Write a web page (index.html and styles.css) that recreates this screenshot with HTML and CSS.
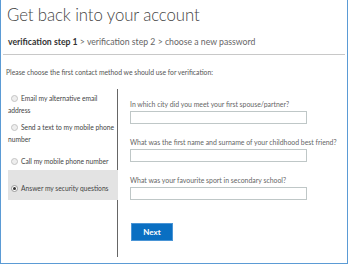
FILE: index.html
```html
<!DOCTYPE html>
<html lang="en">
<head>
  <meta charset="UTF-8">
  <title>Get back into your account</title>
  <meta name="viewport" content="width=device-width, initial-scale=1.0">
  <link rel="stylesheet" href="styles.css">
</head>
<body>

  <div class="frame">
    <!-- HEADER -->
    <h1 class="title">Get back into your account</h1>
    <div class="steps">
      <strong>verification step 1</strong> &gt; verification step 2 &gt; choose a new password
    </div>

    <p class="intro">Please choose the first contact method we should use for verification:</p>

    <!-- METHODS + QUESTIONS -->
    <div class="panel">
      <div class="methods">
        <label class="method m-email">
          <span class="radio"></span>Email my alternative email address
        </label>
        <label class="method m-text">
          <span class="radio"></span>Send a text to my mobile phone number
        </label>
        <label class="method m-call">
          <span class="radio"></span>Call my mobile phone number
        </label>
        <label class="method selected">
          <span class="radio checked"></span>Answer my security questions
        </label>
      </div>

      <div class="questions">
        <div class="question">
          <div class="q-label">In which city did you meet your first spouse/partner?</div>
          <div class="q-input"></div>
        </div>
        <div class="question">
          <div class="q-label">What was the first name and surname of your childhood best friend?</div>
          <div class="q-input"></div>
        </div>
        <div class="question">
          <div class="q-label">What was your favourite sport in secondary school?</div>
          <div class="q-input"></div>
        </div>
        <button class="next-btn">Next</button>
      </div>
    </div>
  </div>

</body>
</html>
```

FILE: styles.css
```css
body {
  font-family: Lato, "Open Sans", sans-serif;
  background: #ffffff;
  margin: 0;
  padding: 0;
}

/* --- FRAME --- */
.frame {
  width: 346px;
  height: 263px;
  border: 1px solid #5b9bd5;
  border-top: none;
  overflow: hidden;
}

/* --- HEADER --- */
.title {
  margin: 0;
  padding: 3px 0 0 6px;
  font-size: 16.8px;
  letter-spacing: -0.1px;
  line-height: 24px;
  font-weight: 300;
  color: #444;
}

.steps {
  margin: 9px 2px 0 2px;
  padding: 0 0 6px 5px;
  font-size: 8.7px;
  line-height: 12px;
  color: #666;
  border-bottom: 1px solid #c8c8c8;
}

.steps strong {
  color: #333;
}

.intro {
  margin: 12px 0 0 5px;
  font-size: 6.8px;
  line-height: 10px;
  color: #555;
}

/* --- PANEL --- */
.panel {
  display: flex;
  margin: 12px 0 0 7px;
}

.methods {
  width: 110px;
  height: 168px;
  border-right: 1px solid #666;
  padding-top: 3px;
  box-sizing: border-box;
}

.method {
  display: block;
  font-size: 6.7px;
  line-height: 12px;
  color: #444;
}

.m-email {
  margin-bottom: 5px;
}

.m-text {
  margin-bottom: 10px;
}

.m-call {
  margin-bottom: 3px;
}

.method.selected {
  background: #e3e3e3;
  padding: 12px 0 6px 0;
  margin-right: -1px;
}

.radio {
  display: inline-block;
  width: 5px;
  height: 5px;
  border: 1px solid #c4c4c4;
  background: #eeeeee;
  border-radius: 50%;
  margin: 0 3px 0 3px;
  vertical-align: -1px;
  position: relative;
}

.radio.checked {
  border-color: #999;
  background: #ffffff;
}

.radio.checked::after {
  content: "";
  position: absolute;
  left: 1px;
  top: 1px;
  width: 3px;
  height: 3px;
  border-radius: 50%;
  background: #333;
}

/* --- QUESTIONS --- */
.questions {
  padding: 10px 0 0 12px;
}

.question {
  margin-bottom: 13px;
}

.q-label {
  font-size: 6.9px;
  line-height: 11px;
  color: #666;
  white-space: nowrap;
}

.q-input {
  width: 175px;
  height: 11px;
  border: 1px solid #bfc7c7;
  margin-top: 1px;
}

.next-btn {
  margin: 10px 0 0 1px;
  width: 42px;
  height: 18px;
  background-color: #0a6fc2;
  color: white;
  border: 1px solid #4a95d6;
  font-family: Lato, "Open Sans", sans-serif;
  font-size: 8px;
  font-weight: 700;
  padding: 0;
  cursor: pointer;
}
```
